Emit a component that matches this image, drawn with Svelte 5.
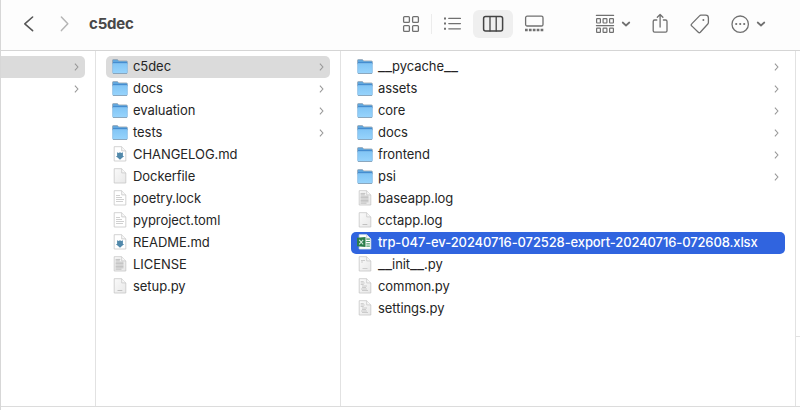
<script>
  const project = [
    { name: 'c5dec', type: 'folder', selected: true },
    { name: 'docs', type: 'folder' },
    { name: 'evaluation', type: 'folder' },
    { name: 'tests', type: 'folder' },
    { name: 'CHANGELOG.md', type: 'markdown' },
    { name: 'Dockerfile', type: 'blank' },
    { name: 'poetry.lock', type: 'text' },
    { name: 'pyproject.toml', type: 'text' },
    { name: 'README.md', type: 'markdown' },
    { name: 'LICENSE', type: 'dense' },
    { name: 'setup.py', type: 'tiny' }
  ];
  const contents = [
    { name: '__pycache__', type: 'folder' },
    { name: 'assets', type: 'folder' },
    { name: 'core', type: 'folder' },
    { name: 'docs', type: 'folder' },
    { name: 'frontend', type: 'folder' },
    { name: 'psi', type: 'folder' },
    { name: 'baseapp.log', type: 'dense' },
    { name: 'cctapp.log', type: 'tiny' },
    { name: 'trp-047-ev-20240716-072528-export-20240716-072608.xlsx', type: 'excel', active: true },
    { name: '__init__.py', type: 'init' },
    { name: 'common.py', type: 'code' },
    { name: 'settings.py', type: 'code' }
  ];
</script>

{#snippet chevron()}
  <svg class="chevron" width="6" height="10" viewBox="0 0 6 10"><path d="M.9 1.6 3.9 5 .9 8.4" /></svg>
{/snippet}

{#snippet icon(type)}
  <svg class="file-icon" class:document={type !== 'folder'} width="16" height="16" viewBox="0 0 16 16">
    {#if type === 'folder'}
      <path d="M.5 3V1.4Q.5.6 1.3.6h4.1l1.4 1.3h7.5q1.1 0 1.1 1V5H.5z" fill="#62a8de" stroke="#929eaa" stroke-width=".7" />
      <path d="M.6 4h14.8v9.5q0 1-1 1H1.6q-1 0-1-1z" fill="url(#folder-face)" stroke="#80b4dd" stroke-width=".6" />
      <path d="M1 3.6h14" stroke="#408bd0" stroke-width="1" />
      <path d="M1 14.5h14" stroke="#8298aa" stroke-width=".7" />
    {:else}
      <path d="M2.2 .7h7.5L13.8 5v10H2.2z" fill={['markdown', 'text', 'excel'].includes(type) ? '#fff' : 'url(#paper)'} stroke={type === 'excel' ? '#dce8e0' : '#c6c6c6'} stroke-width=".8" />
      <path d="M9.7.8v4.1h4.1" fill="#f8f8f8" stroke="#c8c8c8" stroke-width=".8" />
      {#if type === 'markdown'}
        <path d="M5.1 6.2 6.6 7l1.4-.8L9.4 7l1.5-.8v3.7h1.3L8 13.7 3.8 9.9h1.3z" fill="#5289ab" />
      {:else if type === 'text'}
        <path d="M4 5.5h4M4 7.5h6M4 9.5h8M4 11.5h7" stroke="#c4c4c4" stroke-width=".8" />
      {:else if type === 'dense'}
        <path d="M3.5 3.4h4.8M3.5 4.8h4.3M3.5 6.2h8M3.5 7.6h8M3.5 9h8M3.5 10.4h8M3.5 11.8h8M3.5 13.2h6" stroke="#b4b4b4" stroke-width=".8" />
      {:else if type === 'tiny'}
        <path d="M5.5 12.5h4.8" stroke="#b5b5b5" stroke-width=".8" />
      {:else if type === 'init'}
        <path d="M4 4.5h4M4 6h2M5.5 12.5h5" stroke="#c4c4c4" stroke-width=".8" />
      {:else if type === 'code'}
        <path d="M3.7 3.6h3M3.7 5h4M3.7 6.5h3M5 8h5M5 9.5h4M4 11h6M5 12.5h6" stroke="#c2c2c2" stroke-width=".8" />
      {:else if type === 'excel'}
        <path d="M9.3 5.1h3.6M9.3 7.5h3.6M9.3 9.9h3.6M9.3 12.1h3.6" stroke="#55a374" stroke-width="1.2" />
        <path d="M0 3.8 8.5 3v10L0 12.2z" fill="#2c7e4b" />
        <path d="m2.2 5.8 4 4.6m0-4.6-4 4.6" stroke="#d2e7da" stroke-width="1.1" />
      {/if}
    {/if}
  </svg>
{/snippet}

{#snippet listing(files)}
  {#each files as file}
    <div class="row" class:selected={file.selected} class:active={file.active}>
      {@render icon(file.type)}
      <span class="name">{#each file.name.split(/(__)/) as part}{#if part === '__'}<span class="underscores">{part}</span>{:else}{part}{/if}{/each}</span>
      {#if file.type === 'folder'}{@render chevron()}{/if}
    </div>
  {/each}
{/snippet}

<div class="window">
  <svg class="defs" width="0" height="0">
    <linearGradient id="folder-face" x1="0" y1="0" x2="0" y2="1"><stop stop-color="#80c4f5" /><stop offset="1" stop-color="#98d4fc" /></linearGradient>
    <linearGradient id="paper" x1="0" y1="0" x2="1" y2="1"><stop stop-color="#fafafa" /><stop offset="1" stop-color="#e8e8e8" /></linearGradient>
  </svg>
  <header>
    <nav>
      <svg width="12" height="18" viewBox="0 0 12 18"><path d="M9.6 2 1.8 8.8l7.8 6.8" stroke-width="1.6" stroke="#575757" /></svg>
      <svg class="forward" width="12" height="18" viewBox="0 0 12 18"><path d="m2.4 2 6.4 6.8-6.4 6.8" stroke-width="1.5" stroke="#b5b5b5" /></svg>
      <h1>c5dec</h1>
    </nav>
    <div class="views">
      <svg width="18" height="18" viewBox="0 0 18 18"><g><rect x="1.6" y="1.6" width="5.8" height="5.8" rx="1" /><rect x="10.6" y="1.6" width="5.8" height="5.8" rx="1" /><rect x="1.6" y="10.6" width="5.8" height="5.8" rx="1" /><rect x="10.6" y="10.6" width="5.8" height="5.8" rx="1" /></g></svg>
      <i class="separator"></i>
      <svg width="18" height="18" viewBox="0 0 18 18"><path d="M4.8 3.4h11.6M4.8 8.6h11.6M4.8 13.8h11.6" /><path d="M0 3.4h2M0 8.6h2M0 13.8h2" stroke-width="2" stroke-linecap="butt" /></svg>
      <div class="view-active"><svg width="22" height="18" viewBox="0 0 22 18"><rect x="1.6" y="1.6" width="19" height="14.4" rx="2" stroke-width="1.5" /><path d="M8 2v14M14.2 2v14" /></svg></div>
      <svg class="gallery" width="20" height="18" viewBox="0 0 20 18"><rect x="1.6" y="1.2" width="17.4" height="9.8" rx="1.6" /><path d="M1 15h18.6" stroke-width="2.6" stroke-linecap="butt" stroke-dasharray="2.7 1.2" /></svg>
    </div>
    <div class="actions">
      <svg width="20" height="20" viewBox="0 0 20 20"><path d="M1.4 1.4h17.2M1.4 11.6h17.2" stroke-width="1.2" /><g stroke-width="1.2"><rect x="1.6" y="4.6" width="3.8" height="4.4" rx=".5" /><rect x="8.1" y="4.6" width="3.8" height="4.4" rx=".5" /><rect x="14.6" y="4.6" width="3.8" height="4.4" rx=".5" /><rect x="1.6" y="14.2" width="3.8" height="4.2" rx=".5" /><rect x="8.1" y="14.2" width="3.8" height="4.2" rx=".5" /><rect x="14.6" y="14.2" width="3.8" height="4.2" rx=".5" /></g></svg>
      <svg class="down" width="10" height="8" viewBox="0 0 10 8"><path d="m1.7 2.5 3.3 3 3.3-3" stroke-width="1.7" /></svg>
      <svg class="share" width="18" height="22" viewBox="0 0 18 22"><path d="M5.8 7H3.6Q2.2 7 2.2 8.4v9.4q0 1.4 1.4 1.4h11q1.4 0 1.4-1.4V8.4q0-1.4-1.4-1.4h-2.2M9.1 14V1.5M6.3 4.3l2.8-2.8 2.8 2.8" /></svg>
      <svg class="tag" width="20" height="22" viewBox="0 0 20 22"><path d="m10.9 2.2 4.8-.1q2.7 0 2.7 2.8v4.7q0 .8-.6 1.4l-7.5 8.2q-1 1-2 0l-6.6-6.3q-1.1-1 0-2l7.8-8q.6-.7 1.4-.7z" /><circle cx="13.4" cy="7" r="1" fill="#707070" stroke="none" /></svg>
      <svg class="more" width="20" height="20" viewBox="0 0 20 20"><circle cx="10.2" cy="10.2" r="8.2" /><path d="M6.2 10h.01M10.2 10h.01M14.2 10h.01" stroke-width="2.2" /></svg>
      <svg class="down last" width="10" height="8" viewBox="0 0 10 8"><path d="m1.7 2.5 3.3 3 3.3-3" stroke-width="1.7" /></svg>
    </div>
  </header>
  <main>
    <section class="ancestor"><div class="row selected">{@render chevron()}</div><div class="row">{@render chevron()}</div></section>
    <section class="project">{@render listing(project)}</section>
    <section class="contents">{@render listing(contents)}</section>
    <section class="preview"><div></div></section>
  </main>
  <footer></footer>
</div>

<style>
  .window { box-sizing: border-box; width: 800px; height: 410px; border-left: 1px solid #d7d7d7; background: #fff; overflow: hidden; font: 13px/22px Inter, 'Liberation Sans', sans-serif; letter-spacing: -.06px; color: #252525; display: flex; flex-direction: column; }
  .defs { position: absolute; }
  svg { display: block; flex-shrink: 0; fill: none; }
  header { box-sizing: border-box; height: 51px; flex-shrink: 0; border-bottom: 1px solid #d5d5d5; background: #fdfdfd; display: flex; align-items: center; padding-bottom: 3px; }
  header svg { stroke: #707070; stroke-width: 1.3; stroke-linecap: round; stroke-linejoin: round; }
  nav, .views, .actions { display: flex; align-items: center; }
  nav { width: 401px; padding-left: 22px; box-sizing: border-box; }
  .forward { margin-left: 24px; }
  h1 { margin: 0 0 0 18px; font-size: 15px; font-weight: 700; line-height: 20px; letter-spacing: -.2px; color: #494949; }
  .views { width: 193px; }
  .separator { width: 1px; height: 20px; background: #ececec; margin: 0 12px 0 11px; }
  .view-active { width: 40px; height: 28px; border-radius: 6px; background: #efefef; display: grid; place-items: center; margin: 0 11px 0 11px; }
  .view-active svg { stroke: #444; }
  .down { margin-left: 6px; }
  .share { margin-left: 20px; }
  .tag { margin-left: 21px; }
  .more { margin-left: 20px; }
  .down.last { margin-left: 6px; }
  main { flex: 1; min-height: 0; display: flex; }
  section { box-sizing: border-box; padding-top: 5px; border-right: 1px solid #e2e2e2; }
  .ancestor { width: 95px; padding-right: 10px; }
  .project { width: 245px; padding-left: 10px; padding-right: 10px; }
  .contents { width: 455px; padding-left: 10px; padding-right: 10px; }
  .preview { flex: 1; border: 0; padding-top: 285px; }
  .preview div { border-top: 1px solid #e2e2e2; }
  .row { height: 22px; box-sizing: border-box; display: flex; align-items: center; padding: 0 5px 0 6px; border-radius: 5px; }
  .ancestor .row { border-radius: 0 5px 5px 0; }
  .selected { background: #dbdbdb; }
  .active { background: #3064df; color: #fff; font-weight: 500; letter-spacing: -.117px; }
  .document { margin-bottom: 2px; }
  .name { margin: 0 0 2px 5px; line-height: 20px; white-space: nowrap; }
  .underscores { font-size: 15.4px; line-height: 0; letter-spacing: 0; }
  .chevron { margin-left: auto; stroke: #989898; stroke-width: 1.1; }
  footer { height: 3px; border-top: 1px solid #dcdcdc; flex-shrink: 0; }
</style>
